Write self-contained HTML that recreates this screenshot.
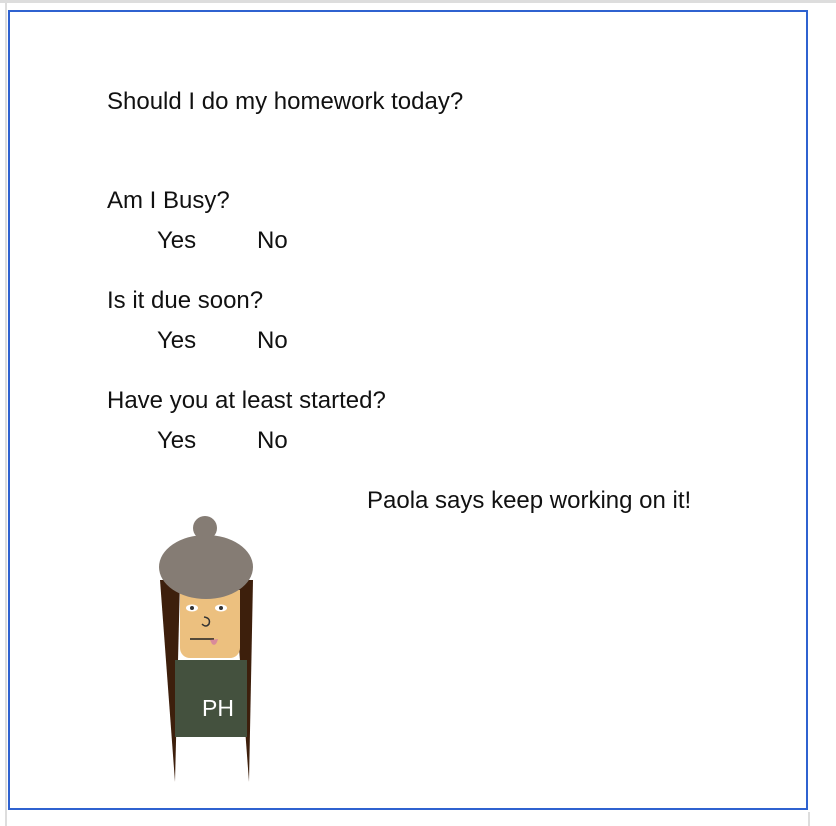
<!DOCTYPE html>
<html><head><style>
body{margin:0;width:836px;height:826px;background:#fff;position:relative;overflow:hidden;font-family:"Liberation Sans",Arial,sans-serif;color:#111}
.frame{position:absolute;left:8px;top:10px;width:796px;height:796px;border:2px solid #2f62d0}
.gl{position:absolute;background:#ddd}
.t{position:absolute;font-size:24px;white-space:nowrap;line-height:24px}
</style></head><body>
<div class="gl" style="left:0;top:0;width:836px;height:3px"></div>
<div class="gl" style="left:5px;top:0;width:2px;height:826px"></div>
<div class="gl" style="left:808px;top:812px;width:2px;height:14px"></div>
<div class="frame"></div>
<div class="t" style="left:107px;top:90px">Should I do my homework today?</div>
<div class="t" style="left:107px;top:189px">Am I Busy?</div>
<div class="t" style="left:157px;top:229px">Yes</div>
<div class="t" style="left:257px;top:229px">No</div>
<div class="t" style="left:107px;top:289px">Is it due soon?</div>
<div class="t" style="left:157px;top:329px">Yes</div>
<div class="t" style="left:257px;top:329px">No</div>
<div class="t" style="left:107px;top:389px">Have you at least started?</div>
<div class="t" style="left:157px;top:429px">Yes</div>
<div class="t" style="left:257px;top:429px">No</div>
<div class="t" style="left:367px;top:489px">Paola says keep working on it!</div>
<svg style="position:absolute;left:0;top:0" width="836" height="826">
<polygon points="160,580 180,580 175,782" fill="#3d1f0c"/>
<polygon points="234,580 253,580 249,782" fill="#3d1f0c"/>
<rect x="180" y="590" width="60" height="68" rx="10" fill="#ecc07f"/>
<rect x="180" y="590" width="60" height="40" fill="#ecc07f"/>
<circle cx="205" cy="528" r="12" fill="#857c74"/>
<ellipse cx="206" cy="567" rx="47" ry="32" fill="#857c74"/>
<ellipse cx="192" cy="608" rx="6" ry="3.5" fill="#fff"/><circle cx="192" cy="608" r="2" fill="#333"/>
<ellipse cx="221" cy="608" rx="6" ry="3.5" fill="#fff"/><circle cx="221" cy="608" r="2" fill="#333"/>
<path d="M204,617 Q211,618 209,624 Q206,628 202,624" stroke="#333" stroke-width="1.5" fill="none"/>
<line x1="190" y1="639" x2="214" y2="639" stroke="#222" stroke-width="1.5"/>
<path d="M210,640 L218,639 Q216,647 212,644 Z" fill="#d98a9a"/>
<rect x="175" y="660" width="72" height="77" fill="#44513e"/>
<text x="202" y="716" fill="#fff" font-size="23" font-family="Liberation Sans,Arial,sans-serif">PH</text>
</svg>
</body></html>
